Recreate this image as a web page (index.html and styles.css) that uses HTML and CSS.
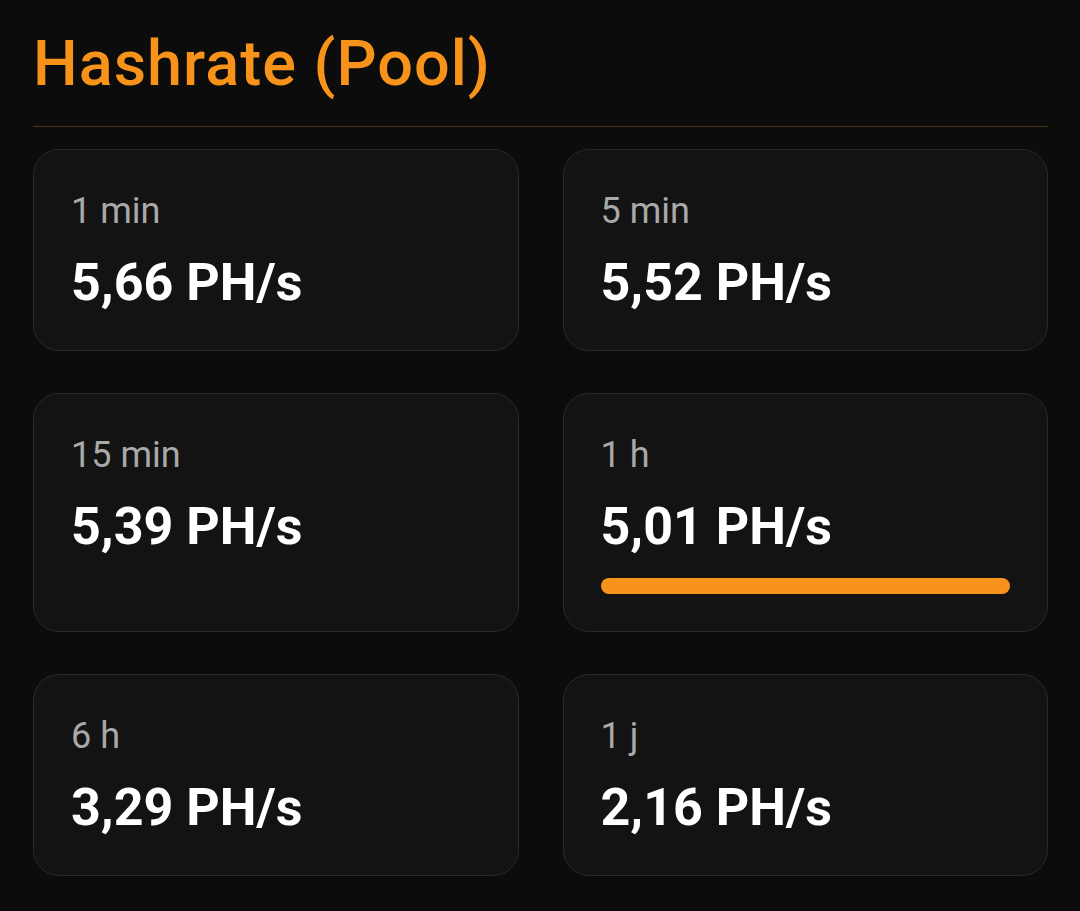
FILE: index.html
```html
<!DOCTYPE html>
<html lang="fr">
<head>
<meta charset="utf-8">
<title>Hashrate (Pool)</title>
<link rel="stylesheet" href="styles.css">
</head>
<body>
<section class="panel">
  <h1 class="title">Hashrate (Pool)</h1>
  <div class="divider"></div>
  <div class="grid">
    <div class="card"><div class="label">1 min</div><div class="value">5,66 PH/s</div></div>
    <div class="card"><div class="label">5 min</div><div class="value">5,52 PH/s</div></div>
    <div class="card"><div class="label">15 min</div><div class="value">5,39 PH/s</div></div>
    <div class="card"><div class="label">1 h</div><div class="value">5,01 PH/s</div><div class="bar"></div></div>
    <div class="card"><div class="label">6 h</div><div class="value">3,29 PH/s</div></div>
    <div class="card"><div class="label">1 j</div><div class="value">2,16 PH/s</div></div>
  </div>
</section>
</body>
</html>
```
FILE: styles.css
```css
html, body {
  margin: 0;
  padding: 0;
  background: #0c0c0c;
  font-family: Roboto, "Noto Sans", "Liberation Sans", sans-serif;
}
.panel {
  padding: 29px 32px 0 33px;
}
.title {
  margin: 0;
  font-size: 63px;
  font-weight: 500;
  line-height: 70px;
  letter-spacing: 1px;
  color: #f7931a;
}
.divider {
  height: 1px;
  background: #4a3417;
  margin-top: 27px;
}
.grid {
  margin-top: 22px;
  display: grid;
  grid-template-columns: 1fr 1fr;
  column-gap: 44px;
  row-gap: 42px;
}
.card {
  background: #131313;
  border: 1px solid #2a2a2a;
  border-radius: 26px;
  padding: 40px 37px 37px 37px;
}
.label {
  font-size: 36px;
  line-height: 42px;
  color: #a9a9a9;
}
.value {
  margin-top: 20px;
  font-size: 52px;
  font-weight: 700;
  line-height: 61px;
  color: #ffffff;
}
.bar {
  margin-top: 21px;
  height: 16px;
  border-radius: 8px;
  background: #f7931a;
}
```
